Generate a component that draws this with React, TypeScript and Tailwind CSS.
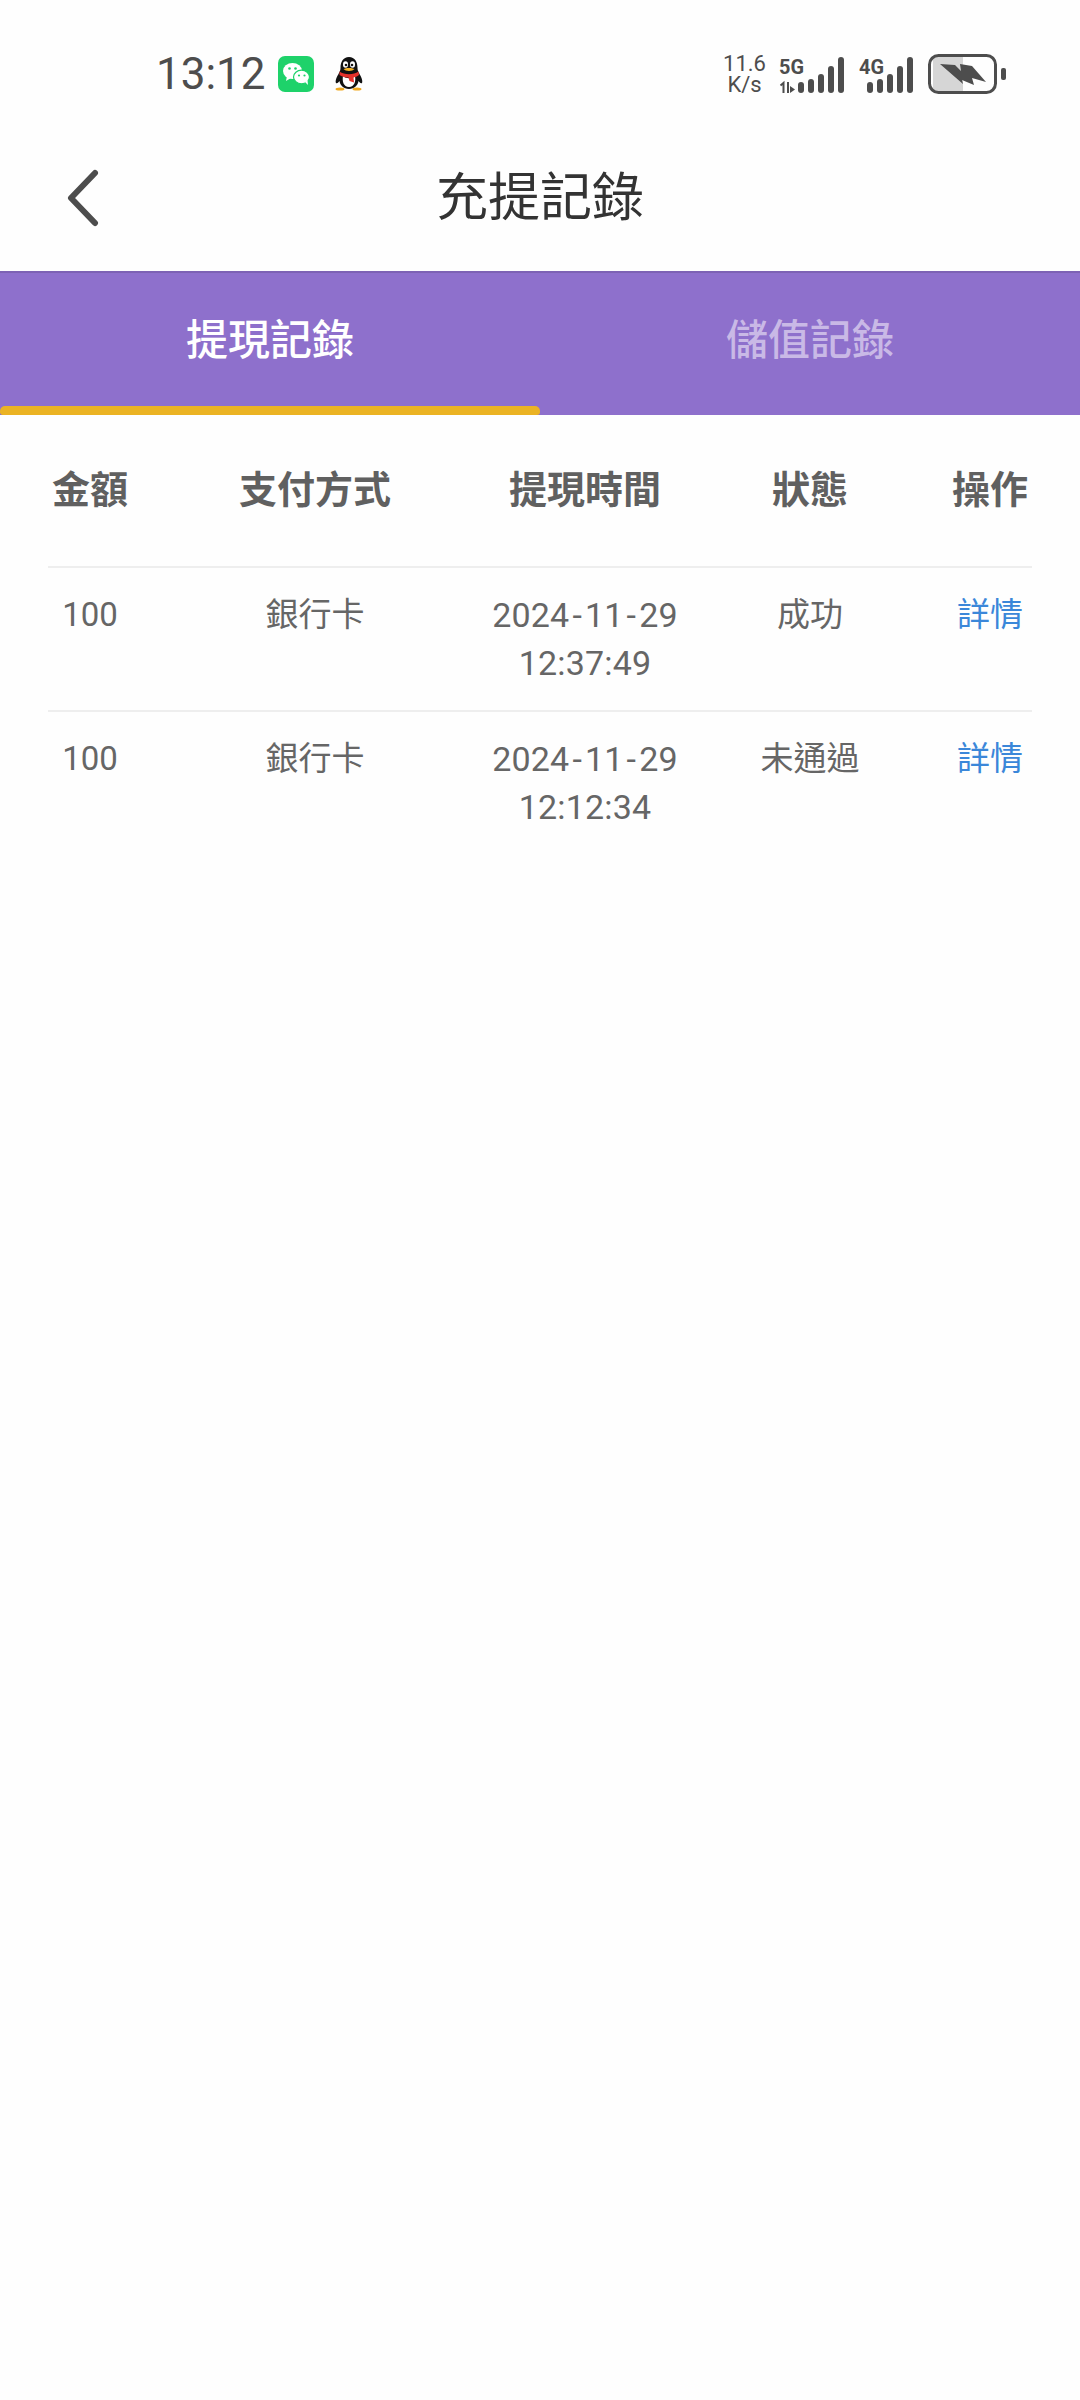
const FONT = "font-['Roboto','Noto_Sans_CJK_TC',sans-serif]";

function WeChat() {
  return (
    <svg width="36" height="36" viewBox="0 0 36 36" className="ml-[12px]">
      <rect width="36" height="36" rx="7" fill="#1ed26a" />
      <ellipse cx="14.500" cy="15" rx="9.500" ry="8" fill="#fff" />
      <path d="M9 20l-1 5 5-3z" fill="#fff" />
      <ellipse cx="23.500" cy="21" rx="8" ry="6.800" fill="#fff" stroke="#1ed26a" strokeWidth="1.200" />
      <path d="M27 26l3 3-.5-5z" fill="#fff" />
      <circle cx="11.500" cy="12.500" r="1.300" fill="#1ed26a" />
      <circle cx="17.500" cy="12.500" r="1.300" fill="#1ed26a" />
      <circle cx="21" cy="19.500" r="1.100" fill="#1ed26a" />
      <circle cx="26.500" cy="19.500" r="1.100" fill="#1ed26a" />
    </svg>
  );
}

function QQ() {
  return (
    <svg width="28" height="34" viewBox="0 0 28 34" className="ml-[21px]">
      <ellipse cx="5" cy="32" rx="4.500" ry="1.600" fill="#f0a81e" />
      <ellipse cx="22" cy="32" rx="4.500" ry="1.600" fill="#f0a81e" />
      <path d="M14 0c6 0 8.500 5 8.500 11 0 2 .5 3 2 6 2 3.500 3.500 7 2.500 9-1 1-2.500-.5-3.500-2-.5 4-4 8-9.500 8s-9-4-9.500-8c-1 1.500-2.500 3-3.500 2-1-2 .5-5.500 2.500-9 1.500-3 2-4 2-6C5.500 5 8 0 14 0z" fill="#111" />
      <path d="M8 19c3 3 9 3 12 0 1 5-.5 11-6 11s-7-6-6-11z" fill="#fff" />
      <path d="M4.500 14.500c5 3.500 14 3.500 19 0l.5 3.500c-2 1.500-3.500 2-5.500 2.500l.5 5-4.500-1.500-1-3.500c-3 0-6-.5-9-2.500z" fill="#e5312b" />
      <ellipse cx="10.500" cy="7.500" rx="2.500" ry="3.200" fill="#fff" />
      <ellipse cx="17.500" cy="7.500" rx="2.500" ry="3.200" fill="#fff" />
      <circle cx="11" cy="8" r="1.300" fill="#111" />
      <circle cx="17" cy="8" r="1.300" fill="#111" />
      <path d="M8.500 12c3-1.500 8-1.500 11 0-2 2.500-9 2.500-11 0z" fill="#f5b324" />
    </svg>
  );
}

function Bars({ x0 }: { x0: number }) {
  const hs = [11, 14, 19, 27, 36];
  return (
    <>
      {hs.map((h, i) => (
        <rect key={i} x={x0 + i * 10} y={38 - h} width="6" height={h} rx="3" fill="#4d4d4d" />
      ))}
    </>
  );
}

function Signal5G() {
  return (
    <svg width="66" height="38" viewBox="0 0 66 38" className="ml-[13px]">
      <text x="0" y="19" fontSize="21" fontWeight="700" fill="#4d4d4d" fontFamily="Roboto, sans-serif" textLength="25" lengthAdjust="spacingAndGlyphs">5G</text>
      <path d="M4.500 38V28l-3 2.500M9 27v11" stroke="#4d4d4d" strokeWidth="2" fill="none" />
      <path d="M11 31l5 3.500-5 3.500z" fill="#4d4d4d" />
      <Bars x0={19} />
    </svg>
  );
}

function Signal4G() {
  return (
    <svg width="54" height="38" viewBox="0 0 54 38" className="ml-[14px]">
      <text x="0" y="19" fontSize="21" fontWeight="700" fill="#4d4d4d" fontFamily="Roboto, sans-serif" textLength="25" lengthAdjust="spacingAndGlyphs">4G</text>
      <Bars x0={8} />
    </svg>
  );
}

function Battery() {
  return (
    <svg width="78" height="40" viewBox="0 0 78 40" className="ml-[15px]">
      <path d="M5 3h30v34H5z" fill="#d6d6d6" />
      <rect x="1.500" y="1.500" width="66" height="37" rx="9" fill="none" stroke="#4d4d4d" strokeWidth="3" />
      <rect x="73" y="14" width="5" height="12" rx="2" fill="#4d4d4d" />
      <path d="M12 10l15 1 6 6-1-7 12 2 14 16-14-4 2 7-12-5 1 4z" fill="#4d4d4d" />
    </svg>
  );
}

function StatusBar() {
  return (
    <div className="h-[135px] flex items-center justify-between pl-[156px] pr-[74px] pt-[13px]">
      <div className="flex items-center">
        <span className="text-[44px] leading-[50px] text-[#4d4d4d]">13:12</span>
        <WeChat />
        <QQ />
      </div>
      <div className="flex items-center">
        <div className="flex flex-col items-center text-[#4d4d4d] text-[22px] leading-[21px]">
          <span>11.6</span>
          <span>K/s</span>
        </div>
        <Signal5G />
        <Signal4G />
        <Battery />
      </div>
    </div>
  );
}

function NavBar() {
  return (
    <div className="relative h-[136px] flex items-center justify-center pb-[8px]">
      <svg width="36" height="58" viewBox="0 0 36 58" className="absolute left-[65px] top-[34px]">
        <path d="M30 4L6 29l24 25" fill="none" stroke="#4d4d4d" strokeWidth="6" strokeLinecap="round" strokeLinejoin="round" />
      </svg>
      <h1 className="text-[52px] leading-[60px] font-normal text-[#333333]">充提記錄</h1>
    </div>
  );
}

function Tabs() {
  return (
    <div className="relative h-[144px] flex bg-[#8e70cc] border-t-2 border-[#7d62b4]">
      <div className="flex-1 flex items-center justify-center pb-[6px] text-[42px] leading-[50px] font-medium text-white">提現記錄</div>
      <div className="flex-1 flex items-center justify-center pb-[6px] text-[42px] leading-[50px] font-medium text-[#c9b9e6]">儲值記錄</div>
      <div className="absolute left-0 bottom-0 w-[540px] h-[9px] rounded-t-[5px] rounded-b-[3px] bg-[#ebb323]" />
    </div>
  );
}

const rows = [
  { amount: "100", method: "銀行卡", date: ["2024", "11", "29"], time: "12:37:49", status: "成功" },
  { amount: "100", method: "銀行卡", date: ["2024", "11", "29"], time: "12:12:34", status: "未通過" },
];

const GRID = "grid grid-cols-[102px_330px_210px_258px_84px] text-center";

function Hyphen() {
  return <span className="mx-[3px]">-</span>;
}

function Table() {
  return (
    <div className="mx-[48px]">
      <div className={`${GRID} pt-[51px] pb-[52px] text-[38px] leading-[48px] font-bold text-[#606060]`}>
        <div className="pr-[18px]">金額</div>
        <div>支付方式</div>
        <div>提現時間</div>
        <div className="pr-[18px]">狀態</div>
        <div>操作</div>
      </div>
      {rows.map((r) => (
        <div key={r.time} className={`${GRID} border-t-2 border-[#eeeeee] pt-[23px] pb-[23px] text-[33px] leading-[48px] text-[#666666]`}>
          <div className="pr-[18px]">{r.amount}</div>
          <div>{r.method}</div>
          <div className="text-[34px] tracking-[0.2px]">
            <div>
              {r.date[0]}
              <Hyphen />
              {r.date[1]}
              <Hyphen />
              {r.date[2]}
            </div>
            <div>{r.time}</div>
          </div>
          <div className="pr-[18px]">{r.status}</div>
          <div className="text-[#3b87d9]">詳情</div>
        </div>
      ))}
    </div>
  );
}

export default function App() {
  return (
    <div className={`w-[1080px] h-[2400px] bg-[#fefefe] overflow-hidden ${FONT}`}>
      <StatusBar />
      <NavBar />
      <Tabs />
      <Table />
    </div>
  );
}
